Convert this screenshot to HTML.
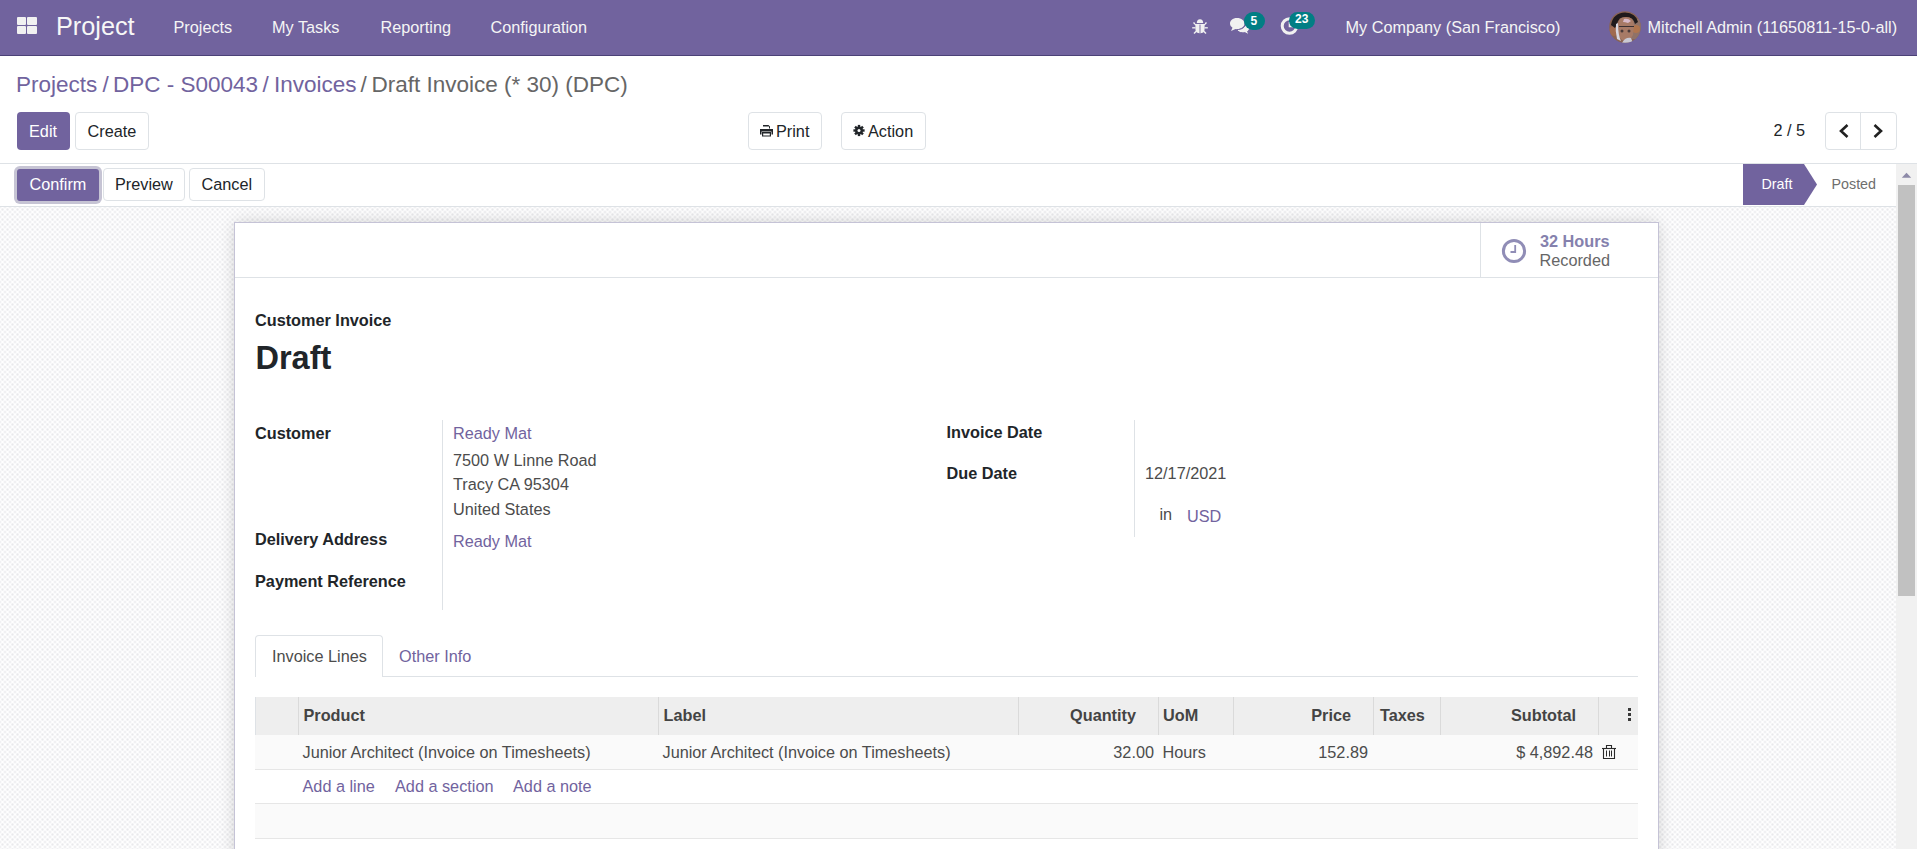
<!DOCTYPE html><html><head><meta charset="utf-8"><style>
html,body{margin:0;padding:0;}
body{width:1917px;height:849px;overflow:hidden;position:relative;background:#fff;font-family:"Liberation Sans",sans-serif;}
.t{position:absolute;white-space:nowrap;line-height:40px;}
.r{position:absolute;}
</style></head><body>
<div class="r" style="left:0px;top:0px;width:1917px;height:55px;background:#71639e"></div>
<div class="r" style="left:0px;top:55px;width:1917px;height:1px;background:#4b4177"></div>
<div class="r" style="left:17px;top:17px;width:9px;height:8px;background:#f1f1f1;border-radius:1px"></div>
<div class="r" style="left:27px;top:17px;width:10px;height:8px;background:#f1f1f1;border-radius:1px"></div>
<div class="r" style="left:17px;top:26px;width:9px;height:8px;background:#f1f1f1;border-radius:1px"></div>
<div class="r" style="left:27px;top:26px;width:10px;height:8px;background:#f1f1f1;border-radius:1px"></div>
<div class="t" style="left:56px;top:6px;font-size:25.25px;font-weight:400;color:#f7f7f7;">Project</div>
<div class="t" style="left:173.5px;top:7px;font-size:16.25px;font-weight:400;color:#f5f5f5;">Projects</div>
<div class="t" style="left:272px;top:7px;font-size:16.25px;font-weight:400;color:#f5f5f5;">My Tasks</div>
<div class="t" style="left:380.5px;top:7px;font-size:16.25px;font-weight:400;color:#f5f5f5;">Reporting</div>
<div class="t" style="left:490.5px;top:7px;font-size:16.25px;font-weight:400;color:#f5f5f5;">Configuration</div>
<svg class="r" style="left:1190px;top:17px;" width="20" height="19" viewBox="0 0 20 19"><g fill="#f1f1f1" stroke="none"><path d="M6.8 6.2 Q6.8 2.2 10 2.2 Q13.2 2.2 13.2 6.2 Z"/><path d="M5.4 6.8 H14.6 V12 Q14.6 16.2 10 16.2 Q5.4 16.2 5.4 12 Z"/></g><g stroke="#f1f1f1" stroke-width="1.35" fill="none"><path d="M3.5 5.5 L6 8"/><path d="M16.5 5.5 L14 8"/><path d="M2.2 10.8 L5.5 10.8"/><path d="M17.8 10.8 L14.5 10.8"/><path d="M4 16.5 L6.5 14"/><path d="M16 16.5 L13.5 14"/></g><rect x="9.55" y="7.6" width="0.9" height="8.6" fill="#71639e"/><rect x="5.2" y="6" width="9.6" height="0.9" fill="#71639e"/></svg>
<svg class="r" style="left:1228px;top:15px;" width="24" height="22" viewBox="0 0 24 22"><path fill="#f1f1f1" d="M9 3 C4.5 3 2 5.6 2 8.6 C2 10.4 3 11.8 4.5 12.8 L3 16 L7.5 14 C8 14.1 8.5 14.2 9 14.2 C13.5 14.2 16.5 11.6 16.5 8.6 C16.5 5.6 13.5 3 9 3 Z"/><path fill="#f1f1f1" stroke="#71639e" stroke-width="1" d="M18 8.5 C20.5 9.5 21.6 11.2 21.6 13 C21.6 14.5 20.8 15.6 19.6 16.4 L21 19.8 L16.8 17.6 C16 17.7 15.5 17.8 14.8 17.8 C11.8 17.8 9.6 16.6 8.8 14.6 C13.5 14.6 17.5 12.3 18 8.5 Z"/></svg>
<div class="r" style="left:1244px;top:11.5px;width:21px;height:18.5px;background:#017e84;border-radius:9.5px"></div>
<div class="t" style="left:1250.5px;top:1px;font-size:12px;font-weight:700;color:#fff;">5</div>
<svg class="r" style="left:1279px;top:15px;" width="22" height="22" viewBox="0 0 22 22"><circle cx="10.5" cy="11" r="7.3" stroke="#f1f1f1" stroke-width="3" fill="none"/><path d="M10.5 7 V11.5 H14" stroke="#f1f1f1" stroke-width="1.6" fill="none"/></svg>
<div class="r" style="left:1289px;top:12px;width:26px;height:17px;background:#017e84;border-radius:8.5px"></div>
<div class="t" style="left:1295px;top:-1px;font-size:12px;font-weight:700;color:#fff;">23</div>
<div class="t" style="left:1345.5px;top:7px;font-size:16.25px;font-weight:400;color:#f5f5f5;">My Company (San Francisco)</div>
<svg class="r" style="left:1609px;top:11px;" width="32" height="32" viewBox="0 0 32 32"><defs><clipPath id="av"><circle cx="16" cy="16" r="15.8"/></clipPath></defs><g clip-path="url(#av)"><rect width="32" height="32" fill="#8a6352"/><rect x="22" y="8" width="10" height="20" fill="#8f7268"/><circle cx="27" cy="18" r="4" fill="#b0754e"/><circle cx="5" cy="20" r="5" fill="#a06a50"/><path d="M2 14 Q4 2 16 1.5 Q27 2 29 11 L26 13 Q24 5 16 6 Q9 6 8 14 L6 17 Z" fill="#1f1a1c"/><path d="M9 12 Q10 6 17 6 Q24 6 25 13 L24 24 Q21 30 16 30 Q11 29 9 24 Z" fill="#a77a66"/><path d="M9 12 Q9 24 12 30 L8 28 Q6 20 7 13 Z" fill="#d8d6e0"/><path d="M15 8 Q19 7 22 10 L19 12 Q16 11 14 11 Z" fill="#d7b9c8"/><path d="M10 15.5 H25" stroke="#3a3032" stroke-width="1"/><circle cx="13" cy="20" r="1.5" fill="#4a3a3a"/><circle cx="20" cy="20" r="1.5" fill="#4a3a3a"/><path d="M13 32 Q16 26 22 27 L24 32 Z" fill="#c9c9d4"/></g></svg>
<div class="t" style="left:1647.5px;top:7px;font-size:16.25px;font-weight:400;color:#f5f5f5;">Mitchell Admin (11650811-15-0-all)</div>
<div class="t" style="left:16px;top:65px;font-size:22.5px;font-weight:400;color:#71639e;">Projects</div>
<div class="t" style="left:102.5px;top:65px;font-size:22.5px;font-weight:400;color:#71639e;">/</div>
<div class="t" style="left:113px;top:65px;font-size:22.5px;font-weight:400;color:#71639e;">DPC - S00043</div>
<div class="t" style="left:262.5px;top:65px;font-size:22.5px;font-weight:400;color:#71639e;">/</div>
<div class="t" style="left:274px;top:65px;font-size:22.5px;font-weight:400;color:#71639e;">Invoices</div>
<div class="t" style="left:360.5px;top:65px;font-size:22.5px;font-weight:400;color:#666;">/</div>
<div class="t" style="left:371.5px;top:65px;font-size:22.5px;font-weight:400;color:#666;">Draft Invoice (* 30) (DPC)</div>
<div class="r" style="left:17px;top:112px;width:53px;height:38px;background:#71639e;border-radius:4px"></div>
<div class="t" style="left:29px;top:111px;font-size:16.25px;font-weight:400;color:#fff;">Edit</div>
<div class="r" style="left:75px;top:112px;width:74px;height:38px;background:#fff;border:1px solid #dee2e6;border-radius:4px;box-sizing:border-box"></div>
<div class="t" style="left:87.5px;top:111px;font-size:16.25px;font-weight:400;color:#212529;">Create</div>
<div class="r" style="left:748px;top:112px;width:74px;height:38px;background:#fff;border:1px solid #dee2e6;border-radius:4px;box-sizing:border-box"></div>
<svg class="r" style="left:759px;top:123px;" width="15" height="15" viewBox="0 0 15 15"><g fill="#212529"><path d="M4 2 H9.5 L11 3.5 V5.5 H10 V3.5 H4 Z"/><path d="M1 6 H14 V11.5 H12.5 V8.5 H2.5 V11.5 H1 Z"/><path d="M3 9.5 H12 V13.5 H3 Z M4.2 10.5 V12.5 H10.8 V10.5 Z"/><rect x="3" y="9" width="9" height="1"/></g></svg>
<div class="t" style="left:776px;top:111px;font-size:16.25px;font-weight:400;color:#212529;">Print</div>
<div class="r" style="left:841px;top:112px;width:85px;height:38px;background:#fff;border:1px solid #dee2e6;border-radius:4px;box-sizing:border-box"></div>
<svg class="r" style="left:852px;top:124px;" width="14" height="13" viewBox="0 0 14 13"><g transform="translate(7 6.5)" fill="#212529"><rect x="-1.2" y="-5.6" width="2.4" height="2.8" transform="rotate(0)"/><rect x="-1.2" y="-5.6" width="2.4" height="2.8" transform="rotate(45)"/><rect x="-1.2" y="-5.6" width="2.4" height="2.8" transform="rotate(90)"/><rect x="-1.2" y="-5.6" width="2.4" height="2.8" transform="rotate(135)"/><rect x="-1.2" y="-5.6" width="2.4" height="2.8" transform="rotate(180)"/><rect x="-1.2" y="-5.6" width="2.4" height="2.8" transform="rotate(225)"/><rect x="-1.2" y="-5.6" width="2.4" height="2.8" transform="rotate(270)"/><rect x="-1.2" y="-5.6" width="2.4" height="2.8" transform="rotate(315)"/><circle r="3.9"/></g><circle cx="7" cy="6.5" r="1.5" fill="#fff"/></svg>
<div class="t" style="left:868px;top:111px;font-size:16.25px;font-weight:400;color:#212529;">Action</div>
<div class="t" style="left:1773.5px;top:110px;font-size:16.25px;font-weight:400;color:#212529;">2 / 5</div>
<div class="r" style="left:1825px;top:112px;width:72px;height:38px;border:1px solid #dee2e6;border-radius:4px;box-sizing:border-box;background:#fff"></div>
<div class="r" style="left:1860px;top:113px;width:1px;height:36px;background:#dee2e6"></div>
<svg class="r" style="left:1835.6px;top:120px;" width="16" height="22" viewBox="0 0 16 22"><path d="M11.5 5 L5 11 L11.5 17" stroke="#212121" stroke-width="2.6" fill="none"/></svg>
<svg class="r" style="left:1870px;top:120px;" width="16" height="22" viewBox="0 0 16 22"><path d="M4.5 5 L11 11 L4.5 17" stroke="#212121" stroke-width="2.6" fill="none"/></svg>
<div class="r" style="left:0px;top:163px;width:1917px;height:1px;background:#dee2e6"></div>
<div class="r" style="left:0px;top:164px;width:1896px;height:42px;background:#fff"></div>
<div class="r" style="left:0px;top:206px;width:1896px;height:1px;background:#dee2e6"></div>
<div class="r" style="left:17px;top:169px;width:82px;height:32px;background:#71639e;border-radius:3px;box-shadow:0 0 0 3px #c6c4d4"></div>
<div class="t" style="left:29.5px;top:164px;font-size:16.25px;font-weight:400;color:#fff;">Confirm</div>
<div class="r" style="left:103px;top:168px;width:82px;height:33px;background:#fff;border:1px solid #dee2e6;border-radius:4px;box-sizing:border-box"></div>
<div class="t" style="left:115px;top:164px;font-size:16.25px;font-weight:400;color:#212529;">Preview</div>
<div class="r" style="left:189px;top:168px;width:76px;height:33px;background:#fff;border:1px solid #dee2e6;border-radius:4px;box-sizing:border-box"></div>
<div class="t" style="left:201.5px;top:164px;font-size:16.25px;font-weight:400;color:#212529;">Cancel</div>
<svg class="r" style="left:1743px;top:164px;" width="75" height="41" viewBox="0 0 75 41"><path d="M0 0 H61 L74 20.5 L61 41 H0 Z" fill="#71639e"/></svg>
<div class="t" style="left:1761.5px;top:164px;font-size:14.3px;font-weight:400;color:#fff;">Draft</div>
<div class="t" style="left:1831.5px;top:164px;font-size:14.3px;font-weight:400;color:#6e6e6e;">Posted</div>
<div class="r" style="left:0px;top:207px;width:1896px;height:642px;background-color:#fff;background-image:radial-gradient(circle at 50% 50%, #e9e9ec 0, #ececef 0.8px, rgba(255,255,255,0) 1.7px),radial-gradient(circle at 50% 50%, #e9e9ec 0, #ececef 0.8px, rgba(255,255,255,0) 1.7px);background-size:5px 5px;background-position:0 0, 2.5px 2.5px"></div>
<div class="r" style="left:1896px;top:164px;width:21px;height:685px;background:#f1f1f1"></div>
<svg class="r" style="left:1901px;top:170px;" width="11" height="10" viewBox="0 0 11 10"><path d="M0.8 7.8 L5.5 2.8 L10.2 7.8 Z" fill="#8d8aa8"/></svg>
<div class="r" style="left:1898px;top:185px;width:17px;height:411px;background:#c1c1c1"></div>
<div class="r" style="left:234px;top:222px;width:1425px;height:700px;background:#fff;border:1px solid #c5c3d6;box-sizing:border-box;box-shadow:0 0 16px -2px rgba(0,0,0,.2)"></div>
<div class="r" style="left:235px;top:277px;width:1423px;height:1px;background:#dee2e6"></div>
<div class="r" style="left:1480px;top:223px;width:1px;height:54px;background:#dee2e6"></div>
<svg class="r" style="left:1501px;top:238px;" width="26" height="26" viewBox="0 0 26 26"><circle cx="13" cy="13" r="10.6" stroke="#908db6" stroke-width="3" fill="none"/><path d="M14.2 7 V14 H9.5" stroke="#908db6" stroke-width="1.8" fill="none"/></svg>
<div class="t" style="left:1540px;top:221px;font-size:16.25px;font-weight:700;color:#8581ad;">32 Hours</div>
<div class="t" style="left:1539.5px;top:240px;font-size:16.25px;font-weight:400;color:#666;">Recorded</div>
<div class="t" style="left:255px;top:300px;font-size:16.25px;font-weight:700;color:#212529;">Customer Invoice</div>
<div class="t" style="left:255.5px;top:338px;font-size:32.5px;font-weight:700;color:#212529;">Draft</div>
<div class="t" style="left:255px;top:413px;font-size:16.25px;font-weight:700;color:#212529;">Customer</div>
<div class="t" style="left:255px;top:519px;font-size:16.25px;font-weight:700;color:#212529;">Delivery Address</div>
<div class="t" style="left:255px;top:561px;font-size:16.25px;font-weight:700;color:#212529;">Payment Reference</div>
<div class="r" style="left:442px;top:420px;width:1px;height:190px;background:#dee2e6"></div>
<div class="t" style="left:453px;top:413px;font-size:16.25px;font-weight:400;color:#71639e;">Ready Mat</div>
<div class="t" style="left:453px;top:440px;font-size:16.25px;font-weight:400;color:#4c4c4c;">7500 W Linne Road</div>
<div class="t" style="left:453px;top:464px;font-size:16.25px;font-weight:400;color:#4c4c4c;">Tracy CA 95304</div>
<div class="t" style="left:453px;top:489px;font-size:16.25px;font-weight:400;color:#4c4c4c;">United States</div>
<div class="t" style="left:453px;top:521px;font-size:16.25px;font-weight:400;color:#71639e;">Ready Mat</div>
<div class="t" style="left:946.5px;top:412px;font-size:16.25px;font-weight:700;color:#212529;">Invoice Date</div>
<div class="t" style="left:946.5px;top:453px;font-size:16.25px;font-weight:700;color:#212529;">Due Date</div>
<div class="r" style="left:1134px;top:420px;width:1px;height:117px;background:#dee2e6"></div>
<div class="t" style="left:1145px;top:453px;font-size:16.25px;font-weight:400;color:#4c4c4c;">12/17/2021</div>
<div class="t" style="left:1159.5px;top:494px;font-size:16.25px;font-weight:400;color:#4c4c4c;">in</div>
<div class="t" style="left:1187px;top:496px;font-size:16.25px;font-weight:400;color:#71639e;">USD</div>
<div class="r" style="left:255px;top:676px;width:1383px;height:1px;background:#dee2e6"></div>
<div class="r" style="left:255px;top:635px;width:128px;height:42px;background:#fff;border:1px solid #dee2e6;border-bottom:none;border-radius:4px 4px 0 0;box-sizing:border-box"></div>
<div class="t" style="left:272px;top:636px;font-size:16.25px;font-weight:400;color:#4c4c4c;">Invoice Lines</div>
<div class="t" style="left:399px;top:636px;font-size:16.25px;font-weight:400;color:#71639e;">Other Info</div>
<div class="r" style="left:255px;top:697px;width:1383px;height:38px;background:#eee"></div>
<div class="r" style="left:255px;top:697px;width:1px;height:38px;background:#dee2e6"></div>
<div class="r" style="left:298px;top:697px;width:1px;height:38px;background:#dadada"></div>
<div class="r" style="left:658px;top:697px;width:1px;height:38px;background:#dadada"></div>
<div class="r" style="left:1018px;top:697px;width:1px;height:38px;background:#dadada"></div>
<div class="r" style="left:1158px;top:697px;width:1px;height:38px;background:#dadada"></div>
<div class="r" style="left:1233px;top:697px;width:1px;height:38px;background:#dadada"></div>
<div class="r" style="left:1373px;top:697px;width:1px;height:38px;background:#dadada"></div>
<div class="r" style="left:1440px;top:697px;width:1px;height:38px;background:#dadada"></div>
<div class="r" style="left:1598px;top:697px;width:1px;height:38px;background:#dadada"></div>
<div class="t" style="left:303.5px;top:695px;font-size:16.25px;font-weight:700;color:#444;">Product</div>
<div class="t" style="left:663.5px;top:695px;font-size:16.25px;font-weight:700;color:#444;">Label</div>
<div class="t" style="right:781px;top:695px;font-size:16.25px;font-weight:700;color:#444;">Quantity</div>
<div class="t" style="left:1163px;top:695px;font-size:16.25px;font-weight:700;color:#444;">UoM</div>
<div class="t" style="right:566px;top:695px;font-size:16.25px;font-weight:700;color:#444;">Price</div>
<div class="t" style="left:1380px;top:695px;font-size:16.25px;font-weight:700;color:#444;">Taxes</div>
<div class="t" style="right:341px;top:695px;font-size:16.25px;font-weight:700;color:#444;">Subtotal</div>
<div class="r" style="left:1628px;top:708px;width:3px;height:3px;background:#3a3a3a"></div>
<div class="r" style="left:1628px;top:713px;width:3px;height:3px;background:#3a3a3a"></div>
<div class="r" style="left:1628px;top:718px;width:3px;height:3px;background:#3a3a3a"></div>
<div class="r" style="left:255px;top:735px;width:1383px;height:34px;background:#fafafa"></div>
<div class="r" style="left:255px;top:769px;width:1383px;height:1px;background:#e6e6e6"></div>
<div class="t" style="left:302.5px;top:732px;font-size:16.25px;font-weight:400;color:#4c4c4c;">Junior Architect (Invoice on Timesheets)</div>
<div class="t" style="left:662.5px;top:732px;font-size:16.25px;font-weight:400;color:#4c4c4c;">Junior Architect (Invoice on Timesheets)</div>
<div class="t" style="right:763px;top:732px;font-size:16.25px;font-weight:400;color:#4c4c4c;">32.00</div>
<div class="t" style="left:1162.5px;top:732px;font-size:16.25px;font-weight:400;color:#4c4c4c;">Hours</div>
<div class="t" style="right:549px;top:732px;font-size:16.25px;font-weight:400;color:#4c4c4c;">152.89</div>
<div class="t" style="right:324px;top:732px;font-size:16.25px;font-weight:400;color:#4c4c4c;">$ 4,892.48</div>
<svg class="r" style="left:1601px;top:743px;" width="16" height="18" viewBox="0 0 16 18"><g fill="none" stroke="#2a2a2a" stroke-width="1.1"><path d="M5.5 5 V2.5 H10.5 V5"/><path d="M1 5.5 H15"/><path d="M2.5 5.5 V15.5 H13.5 V5.5"/><path d="M5.5 7.5 V13.5 M8.5 7.5 V13.5 M10.5 7.5 V13.5" stroke-width="1"/></g></svg>
<div class="t" style="left:302.5px;top:766px;font-size:16.25px;font-weight:400;color:#71639e;">Add a line</div>
<div class="t" style="left:395px;top:766px;font-size:16.25px;font-weight:400;color:#71639e;">Add a section</div>
<div class="t" style="left:513px;top:766px;font-size:16.25px;font-weight:400;color:#71639e;">Add a note</div>
<div class="r" style="left:255px;top:803px;width:1383px;height:1px;background:#e6e6e6"></div>
<div class="r" style="left:255px;top:804px;width:1383px;height:34px;background:#fafafa"></div>
<div class="r" style="left:255px;top:838px;width:1383px;height:1px;background:#e6e6e6"></div>
</body></html>
